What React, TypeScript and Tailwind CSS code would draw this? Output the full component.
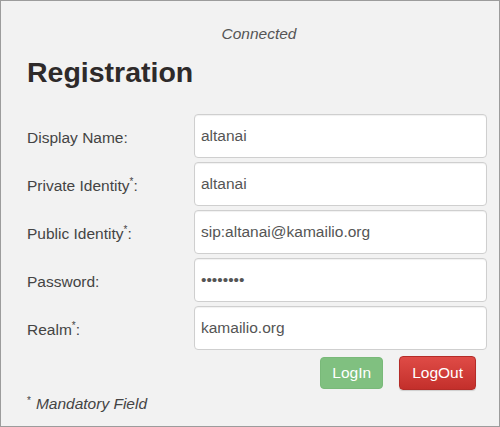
import type { ReactNode } from 'react'

type Field = { label: ReactNode; value: string; type?: string }

const Req = () => <span className="relative -top-[6px] text-[10px] leading-none">*</span>

const FIELDS: Field[] = [
  { label: <>Display Name:</>, value: 'altanai' },
  { label: <>Private Identity<Req />:</>, value: 'altanai' },
  { label: <>Public Identity<Req />:</>, value: 'sip:altanai@kamailio.org' },
  { label: <>Password:</>, value: '12345678', type: 'password' },
  { label: <>Realm<Req />:</>, value: 'kamailio.org' },
]

export default function App() {
  return (
    <div
      className="flex h-[427px] w-[500px] flex-col border border-[#9c9c9c] bg-[#f2f2f2] pt-[23px] pl-[26px] pr-[12px] text-[15.5px] text-[#444]"
      style={{ fontFamily: '"Liberation Sans", Arial, sans-serif' }}
    >
      <p className="pl-[4px] text-center italic leading-[20px] text-[#555]">Connected</p>
      <h1 className="mt-[12px] text-[28.5px] font-bold leading-[32px] text-[#2e2a2a]">Registration</h1>

      <div className="mt-[26px] flex flex-col gap-[4px]">
        {FIELDS.map((f, i) => (
          <div key={i} className="flex h-[44px] items-center">
            <label className="w-[167px] shrink-0 pt-[3px] leading-[20px]">{f.label}</label>
            <input
              readOnly
              type={f.type ?? 'text'}
              defaultValue={f.value}
              className="h-full min-w-0 flex-1 rounded-[4px] border border-[#cfcfcf] bg-white px-[6px] text-[15.5px] text-[#555] shadow-[inset_0_1px_1px_rgba(0,0,0,0.06)] outline-none"
              style={{ fontFamily: '"Liberation Sans", Arial, sans-serif' }}
            />
          </div>
        ))}
      </div>

      <div className="mt-[6px] flex items-center justify-end gap-[16px] pr-[11px]">
        <button
          type="button"
          className="h-[32px] rounded-[4px] border border-[#79b979] bg-[#80c080] px-[11px] leading-[20px] text-white"
        >
          LogIn
        </button>
        <button
          type="button"
          className="h-[34px] rounded-[4px] border border-[#b42c28] bg-gradient-to-b from-[#df4b46] to-[#c32f2b] px-[12px] leading-[20px] text-white shadow-[0_1px_1px_rgba(0,0,0,0.15)]"
        >
          LogOut
        </button>
      </div>

      <p className="mt-[4px] leading-[20px] text-[#444]">
        <span className="relative -top-[5px] text-[10px] leading-none">*</span>
        <span className="ml-[5px] italic">Mandatory Field</span>
      </p>
    </div>
  )
}
